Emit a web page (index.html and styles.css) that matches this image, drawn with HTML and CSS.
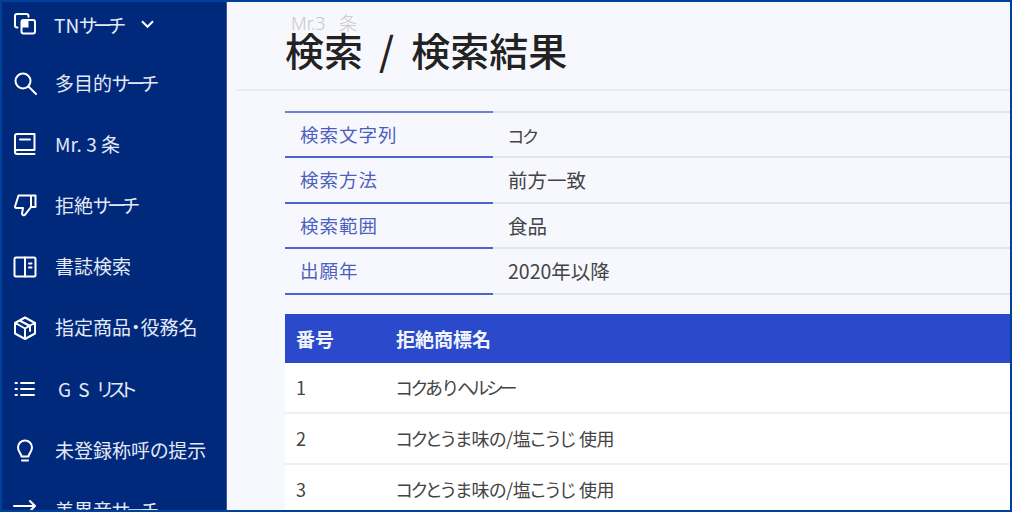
FILE: index.html
```html
<!DOCTYPE html>
<html lang="ja">
<head>
<meta charset="utf-8">
<title>検索結果</title>
<link rel="stylesheet" href="styles.css">
</head>
<body>
<div class="frame">
  <nav class="side">
    <a class="item first"><svg class="ic" viewBox="0 0 24 24"><path d="M4.500 15.500h-.5a2 2 0 0 1-2-2V4a2 2 0 0 1 2-2h9.500a2 2 0 0 1 2 2v.8M10.500 8h9.500a2 2 0 0 1 2 2v9.500a2 2 0 0 1-2 2h-9.500a2 2 0 0 1-2-2V10a2 2 0 0 1 2-2z"/><rect class="fill" x="8" y="8" width="7.500" height="7.500"/></svg><span class="tn">TN<b class="ka">サーチ</b></span><svg class="chev" viewBox="0 0 16 12"><path d="M2 2.500l6 6 6-6"/></svg></a>
    <a class="item"><svg class="ic" viewBox="0 0 24 24"><circle cx="10" cy="10" r="7.500"/><path d="M15.500 15.500L23 23"/></svg><span>多目的<b class="ka">サーチ</b></span></a>
    <a class="item"><svg class="ic" viewBox="0 0 24 24"><path d="M2 20V4a2 2 0 0 1 2-2h17.500v16H4a2 2 0 0 0-2 2 2 2 0 0 0 2 2h17.500M7 7.500h10"/></svg><span>Mr. 3 条</span></a>
    <a class="item"><svg class="ic" viewBox="0 0 24 24"><path d="M18 2.500H5.500L2 13.500a1.500 1.500 0 0 0 1.500 1.500H10l-1 5.500c-.3 1.800 2.500 2.500 3.300.8L18 14zM18 2.500h4.500V14H18"/></svg><span>拒絶<b class="ka">サーチ</b></span></a>
    <a class="item"><svg class="ic" viewBox="0 0 24 24"><rect x="1.500" y="2.500" width="21" height="19" rx="1.500"/><path d="M12 2.500v19M16 8.500h2.500M16 12.500h2.500"/></svg><span>書誌検索</span></a>
    <a class="item"><svg class="ic" viewBox="0 0 24 24"><path d="M12 1.500l10 5.500v10.500l-10 5.500-10-5.500V7zM2.500 7l9.500 5.500L21.500 7M12 12.500V23M6.500 4.500l10.500 5.500v5"/></svg><span>指定商品・役務名</span></a>
    <a class="item"><svg class="ic" viewBox="0 0 24 24"><path d="M8 6h13M8 12h13M8 18h13M2.500 6h1.500M2.500 12h1.500M2.500 18h1.500"/></svg><span class="gs">G S <b class="ka">リスト</b></span></a>
    <a class="item"><svg class="ic" viewBox="0 0 24 24"><path d="M8.500 18.500c0-2.800-3.500-4.500-3.500-9a7 7 0 0 1 14 0c0 4.500-3.500 6.200-3.500 9zM9 22.500h6"/></svg><span>未登録称呼の提示</span></a>
    <a class="item last"><svg class="ic" viewBox="0 0 24 24"><path d="M1 12h21M17 7l5 5-5 5"/></svg><span>差異音<b class="ka">サーチ</b></span></a>
  </nav>
  <main class="main">
    <header class="head">
      <div class="crumb">Mr.3&nbsp;&nbsp;条</div>
      <h1 class="title">検索<span class="sep">/</span>検索結果</h1>
    </header>
    <dl class="cond">
      <div class="row"><dt>検索文字列</dt><dd><b class="tight">コク</b></dd></div>
      <div class="row"><dt>検索方法</dt><dd>前方一致</dd></div>
      <div class="row"><dt>検索範囲</dt><dd>食品</dd></div>
      <div class="row"><dt>出願年</dt><dd>2020年以降</dd></div>
    </dl>
    <table class="result">
      <thead><tr><th class="no">番号</th><th>拒絶商標名</th></tr></thead>
      <tbody>
        <tr><td>1</td><td><b class="kb">コク</b>あり<b class="kc">ヘルシー</b></td></tr>
        <tr><td>2</td><td><b class="kb">コク</b>とうま味の/塩こうじ 使用</td></tr>
        <tr><td>3</td><td><b class="kb">コク</b>とうま味の/塩こうじ 使用</td></tr>
      </tbody>
    </table>
  </main>
</div>
</body>
</html>
```
FILE: styles.css
```css
* { box-sizing: border-box; }
html, body { margin: 0; height: 100%; overflow: hidden; }
body { font-family: "Noto Sans CJK JP", "Noto Sans", sans-serif; font-feature-settings: "palt"; }
b { font-weight: inherit; }
.frame {
  width: 1012px; height: 512px;
  border: 2px solid #00429a;
  display: flex; overflow: hidden;
  background: #f7f8fd;
}
.side {
  width: 225px; flex: none;
  background: #00297c;
  display: flex; flex-direction: column;
  color: #e4e9f6;
  border-right: 1px solid #3d5aa8;
}
.item {
  flex: none; height: 61.2px;
  display: flex; align-items: center;
  padding-left: 11px;
  font-size: 19px;
  white-space: nowrap;
}
.item.first { height: 44px; margin-bottom: 5.500px; }
.item span { margin-left: 18px; }
.item .tn { margin-left: 17px; }
.item .gs { margin-left: 21px; word-spacing: 3px; }
.item .ka { letter-spacing: -3.900px; }
.item .ic { margin-top: 2px; }
.item.first .ic { margin-top: 0; }
.item.last .ic { margin-top: -9px; }
.item.last span { margin-top: -2px; }
.ic { width: 24px; height: 24px; flex: none; fill: none; stroke: #fff; stroke-width: 2; stroke-linejoin: round; stroke-linecap: round; }
.ic .fill { fill: #fff; stroke: none; }
.chev { width: 15px; height: 11px; margin-left: 19px; fill: none; stroke: #fff; stroke-width: 2.200; }
.main { flex: 1; min-width: 0; padding-left: 9px; }
.head {
  height: 89px;
  border-bottom: 2px solid #e8ebf5;
  padding: 11px 0 0 49px;
  margin-bottom: 20px;
}
.crumb { color: #c8c8c8; font-size: 18px; line-height: 20px; height: 20px; margin-left: 6px; font-family: "Noto Sans", "Noto Sans CJK JP", sans-serif; font-weight: 300; word-spacing: 2px; }
.title { margin: -7px 0 0; font-size: 39px; line-height: 46px; font-weight: 500; color: #222; font-feature-settings: normal; }
.sep { margin: 0 17px 0 16px; }
.cond { margin: 0 0 19px 49px; border-top: 2px solid #e0e4f1; }
.row { display: flex; height: 45.400px; border-bottom: 2px solid #e0e4f1; }
.row dt {
  width: 208px; flex: none; margin: 0 0 -2px;
  padding-left: 15px;
  color: #4c5fbd; font-size: 18.500px; line-height: 43px;
  letter-spacing: 1px;
  border-bottom: 2px solid #4f63cc;
  font-feature-settings: normal;
}
.row:first-child dt { box-shadow: 0 -2px 0 #6f80d4; }
.row dd { margin: 0; padding-left: 15px; color: #444; font-size: 19.500px; line-height: 43px; }
.row .tight { font-size: 17px; letter-spacing: -1.500px; }
.result { margin-left: 49px; width: 725px; border-collapse: collapse; table-layout: fixed; }
.result th {
  background: #2b4acb; color: #f2f4fc; height: 49px; padding: 0 0 0 11px;
  text-align: left; font-size: 19px; font-weight: 700;
}
.result th.no { width: 100px; }
.result td {
  background: #fff; color: #444; height: 50.500px; padding: 0 0 0 11px;
  font-size: 18px; border-bottom: 2px solid #eef0f6;
  letter-spacing: -.4px;
}
.result .kb { letter-spacing: -2px; }
.result .kc { letter-spacing: -3px; }
```
